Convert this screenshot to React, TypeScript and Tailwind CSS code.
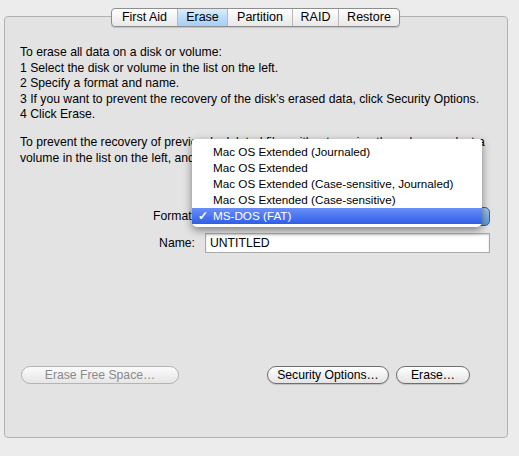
import React from "react";

const tabs = ["First Aid", "Erase", "Partition", "RAID", "Restore"];
const tabWidths = [65, 50, 65, 46, 61];

const formats = [
  "Mac OS Extended (Journaled)",
  "Mac OS Extended",
  "Mac OS Extended (Case-sensitive, Journaled)",
  "Mac OS Extended (Case-sensitive)",
];

export default function App() {
  return (
    <div className="relative w-[519px] h-[456px] bg-[#ececec] text-black text-[12.2px] font-['Liberation_Sans',sans-serif] overflow-hidden">
      <div className="flex flex-col pt-[8px]">
        {/* Tabs */}
        <div className="relative z-10 flex justify-center pr-[8px]">
          <div className="flex h-[19px] rounded-[4px] border border-[#8e8e8e] bg-gradient-to-b from-[#ffffff] to-[#e8e8e8] overflow-hidden shadow-[0_1px_1px_rgba(0,0,0,0.15)]">
            {tabs.map((t, i) => (
              <div
                key={t}
                style={{ width: tabWidths[i] }}
                className={
                  "flex items-center justify-center leading-none text-[12.5px] " +
                  (i > 0 ? "border-l border-[#b8b8b8] " : "") +
                  (t === "Erase" ? "bg-gradient-to-b from-[#dcedfd] via-[#bcdcf8] to-[#a6cff5]" : "")
                }
              >
                {t}
              </div>
            ))}
          </div>
        </div>

        {/* Panel */}
        <div className="mt-[-11px] ml-[4px] w-[504px] h-[422px] rounded-[4px] border border-[#b1b1b1] bg-[#e3e3e3] flex flex-col">
          <div className="pl-[15px] pt-[28px] leading-[15.5px] whitespace-nowrap">
            <div>To erase all data on a disk or volume:</div>
            <div>1 Select the disk or volume in the list on the left.</div>
            <div>2 Specify a format and name.</div>
            <div>3 If you want to prevent the recovery of the disk’s erased data, click Security Options.</div>
            <div>4 Click Erase.</div>
            <div className="h-[12.5px]" />
            <div>To prevent the recovery of previously deleted files without erasing the volume, select a</div>
            <div>volume in the list on the left, and click Erase Free Space.</div>
          </div>

          {/* Form */}
          <div className="flex flex-col gap-[7px] mt-[41px]">
            <div className="flex items-center h-[19px]">
              <div className="w-[193px] text-right pr-[3px]">Format:</div>
              <div className="ml-[8px] w-[284px] h-[19px] rounded-[5px] border border-[#4a5d88] bg-gradient-to-b from-[#9ec4ec] to-[#5f97d6]" />
            </div>
            <div className="flex items-center h-[20px]">
              <div className="w-[190px] text-right">Name:</div>
              <div className="ml-[10px] w-[285px] h-[20px] border border-[#a9a9a9] bg-white shadow-[inset_0_1px_2px_rgba(0,0,0,0.2)] flex items-center pl-[4px]">
                UNTITLED
              </div>
            </div>
          </div>

          {/* Buttons */}
          <div className="flex items-center mt-[113px] pl-[16px] h-[18px]">
            <div className="w-[158px] h-[18px] rounded-full border border-[#b4b4b4] bg-gradient-to-b from-[#fbfbfb] to-[#e6e6e6] flex items-center justify-center text-[#8a8a8a] leading-none">
              Erase Free Space…
            </div>
            <div className="ml-[88px] w-[122px] h-[18px] rounded-full border border-[#6f6f6f] bg-gradient-to-b from-[#ffffff] to-[#e4e4e4] flex items-center justify-center leading-none shadow-[0_1px_1px_rgba(0,0,0,0.15)]">
              Security Options…
            </div>
            <div className="ml-[7px] w-[74px] h-[18px] rounded-full border border-[#6f6f6f] bg-gradient-to-b from-[#ffffff] to-[#e4e4e4] flex items-center justify-center leading-none shadow-[0_1px_1px_rgba(0,0,0,0.15)]">
              Erase…
            </div>
          </div>
        </div>
      </div>

      {/* Popup menu */}
      <div className="absolute left-[192px] top-[139px] w-[290px] pt-[5px] pb-[3px] bg-white rounded-[5px] rounded-t-[3px] shadow-[0_3px_8px_rgba(0,0,0,0.45)] z-20 text-[11.7px]">
        {formats.map((f) => (
          <div key={f} className="h-[16px] flex items-center pl-[21px] leading-none">
            {f}
          </div>
        ))}
        <div className="relative h-[16px] flex items-center pl-[21px] leading-none text-white bg-gradient-to-b from-[#6a8ef7] to-[#2f5ee9]">
          <span className="absolute left-[6px] font-bold">✓</span>
          MS-DOS (FAT)
        </div>
      </div>
    </div>
  );
}
